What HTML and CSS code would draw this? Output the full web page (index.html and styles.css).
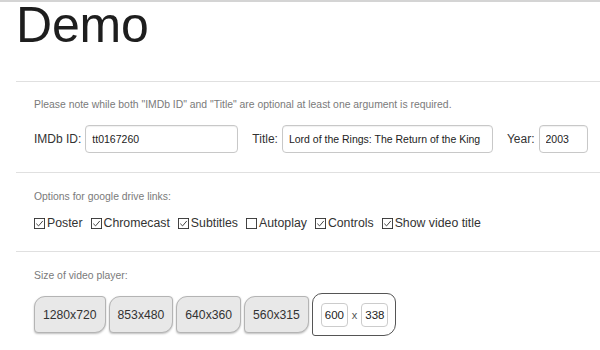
FILE: index.html
```html
<!DOCTYPE html>
<html>
<head>
<meta charset="utf-8">
<link rel="stylesheet" href="styles.css">
</head>
<body>
<div class="page">
  <h1 class="title">Demo</h1>
  <hr class="rule">
  <section class="sec sec-first">
    <p class="hint">Please note while both "IMDb ID" and "Title" are optional at least one argument is required.</p>
    <div class="fields">
      <label class="lbl">IMDb ID:</label>
      <input class="inp inp-id" type="text" value="tt0167260">
      <label class="lbl lbl-gap">Title:</label>
      <input class="inp inp-title" type="text" value="Lord of the Rings: The Return of the King">
      <label class="lbl lbl-gap">Year:</label>
      <input class="inp inp-year" type="text" value="2003">
    </div>
  </section>
  <hr class="rule">
  <section class="sec">
    <p class="hint">Options for google drive links:</p>
    <div class="opts">
      <span class="opt"><svg class="cb" viewBox="0 0 12 12"><rect x="0.5" y="0.5" width="11" height="11" fill="none" stroke="#333"/><path d="M2.5 6.2 L5 8.6 L9.6 3.2" fill="none" stroke="#333" stroke-width="1"/></svg>Poster</span>
      <span class="opt"><svg class="cb" viewBox="0 0 12 12"><rect x="0.5" y="0.5" width="11" height="11" fill="none" stroke="#333"/><path d="M2.5 6.2 L5 8.6 L9.6 3.2" fill="none" stroke="#333" stroke-width="1"/></svg>Chromecast</span>
      <span class="opt"><svg class="cb" viewBox="0 0 12 12"><rect x="0.5" y="0.5" width="11" height="11" fill="none" stroke="#333"/><path d="M2.5 6.2 L5 8.6 L9.6 3.2" fill="none" stroke="#333" stroke-width="1"/></svg>Subtitles</span>
      <span class="opt"><svg class="cb" viewBox="0 0 12 12"><rect x="0.5" y="0.5" width="11" height="11" fill="none" stroke="#333"/></svg>Autoplay</span>
      <span class="opt"><svg class="cb" viewBox="0 0 12 12"><rect x="0.5" y="0.5" width="11" height="11" fill="none" stroke="#333"/><path d="M2.5 6.2 L5 8.6 L9.6 3.2" fill="none" stroke="#333" stroke-width="1"/></svg>Controls</span>
      <span class="opt"><svg class="cb" viewBox="0 0 12 12"><rect x="0.5" y="0.5" width="11" height="11" fill="none" stroke="#333"/><path d="M2.5 6.2 L5 8.6 L9.6 3.2" fill="none" stroke="#333" stroke-width="1"/></svg>Show video title</span>
    </div>
  </section>
  <hr class="rule">
  <section class="sec">
    <p class="hint">Size of video player:</p>
    <div class="sizes">
      <button class="size">1280x720</button>
      <button class="size">853x480</button>
      <button class="size">640x360</button>
      <button class="size">560x315</button>
      <div class="custom">
        <input class="dim" type="text" value="600">
        <span class="times">x</span>
        <input class="dim" type="text" value="338">
      </div>
    </div>
  </section>
</div>
</body>
</html>
```
FILE: styles.css
```css
html, body {
  margin: 0;
  padding: 0;
  background: #fff;
}
body {
  border-top: 2px solid #d4d4d4;
  font-family: "Liberation Sans", Arial, sans-serif;
  color: #333;
}
.page {
  padding-left: 16px;
}
.title {
  margin: 0 0 33px 0;
  font-size: 50px;
  line-height: 46px;
  font-weight: normal;
  color: #1e1e1e;
  letter-spacing: -0.2px;
}
.rule {
  margin: 0;
  border: 0;
  border-top: 1px solid #e0e0e0;
  height: 0;
}
.sec {
  padding: 17px 0 19px 18px;
}
.sec-first {
  padding-top: 16px;
}
.hint {
  margin: 0;
  font-size: 10.4px;
  line-height: 14px;
  color: #7a7a7a;
}
.fields {
  display: flex;
  align-items: center;
  margin-top: 13px;
}
.lbl {
  font-size: 12px;
  color: #333;
  margin-right: 4px;
}
.lbl-gap {
  margin-left: 14px;
}
.inp {
  box-sizing: border-box;
  height: 28px;
  border: 1px solid #c8c8c8;
  border-radius: 4px;
  box-shadow: inset 0 1px 1px rgba(0,0,0,0.06);
  padding: 0 6px;
  font-family: "Liberation Sans", Arial, sans-serif;
  font-size: 10.5px;
  color: #222;
  outline: none;
}
.inp-id { width: 153px; }
.inp-title { width: 211px; }
.inp-year { width: 49px; }
.opts {
  display: flex;
  align-items: center;
  gap: 8px;
  margin-top: 10px;
  height: 18px;
}
.opt {
  display: inline-flex;
  align-items: center;
  font-size: 12.3px;
  color: #333;
}
.cb {
  width: 11px;
  height: 11px;
  margin-right: 2px;
}
.sizes {
  display: flex;
  align-items: center;
  gap: 3px;
  margin-top: 10px;
}
.size {
  box-sizing: border-box;
  height: 37px;
  padding: 0 8px;
  border: 1px solid #b4b4b4;
  border-radius: 11px 4px 11px 4px;
  background: #e8e8e8;
  box-shadow: 0 1px 2px rgba(0,0,0,0.25);
  font-family: "Liberation Sans", Arial, sans-serif;
  font-size: 12.2px;
  color: #333;
}
.custom {
  box-sizing: border-box;
  height: 43px;
  width: 84px;
  display: flex;
  align-items: center;
  padding-left: 8px;
  border: 1px solid #555;
  border-radius: 10px 9px 12px 3px;
  background: #fff;
}
.dim {
  box-sizing: border-box;
  width: 27px;
  height: 24px;
  border: 1px solid #ccc;
  border-radius: 4px;
  padding: 0;
  text-align: center;
  font-family: "Liberation Sans", Arial, sans-serif;
  font-size: 11.5px;
  color: #222;
  outline: none;
}
.times {
  font-size: 11px;
  color: #555;
  margin: 0 4px;
}
```
